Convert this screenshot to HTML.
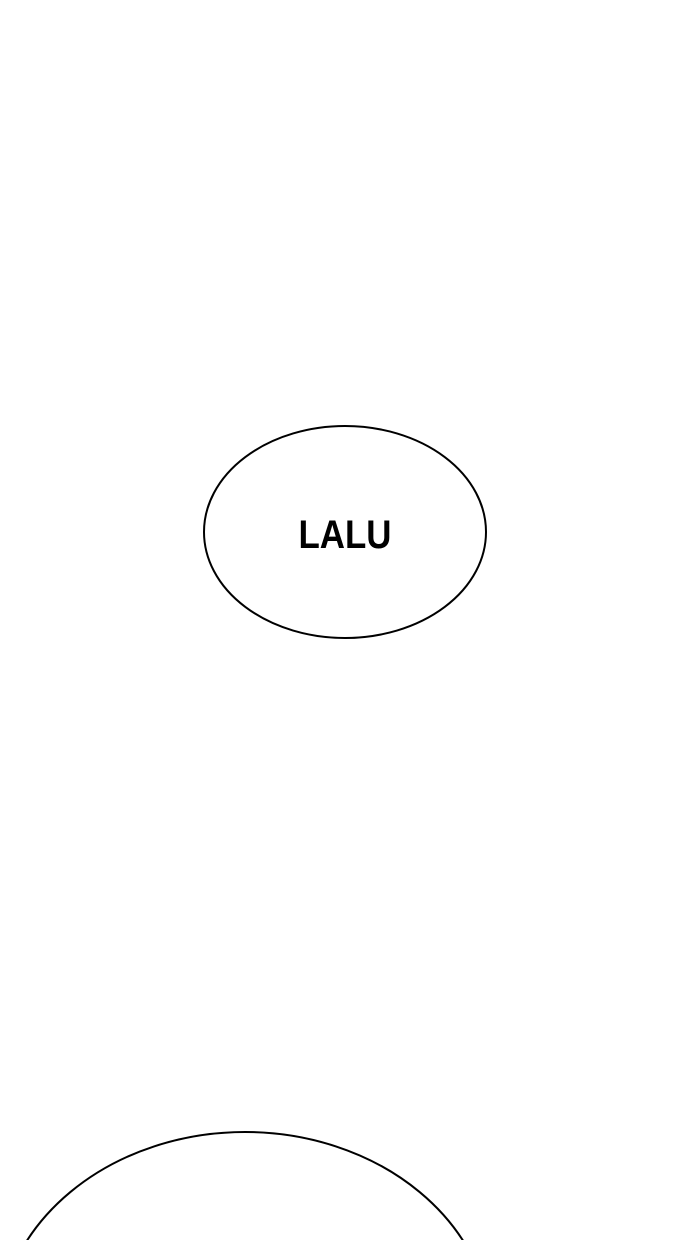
<!DOCTYPE html>
<html><head><style>
html,body{margin:0;padding:0;background:#fff;width:690px;height:1240px;overflow:hidden}
svg{overflow:hidden}
</style></head><body>
<svg width="690" height="1240" viewBox="0 0 690 1240" xmlns="http://www.w3.org/2000/svg" style="display:block">
<ellipse cx="345" cy="532" rx="141" ry="106" fill="#fff" stroke="#000" stroke-width="2"/>
<text x="345" y="548" text-anchor="middle" font-family="Liberation Sans, sans-serif" font-weight="bold" font-size="40" textLength="93" lengthAdjust="spacingAndGlyphs" fill="#000">LALU</text>
<ellipse cx="245" cy="1337" rx="247" ry="205" fill="#fff" stroke="#000" stroke-width="2"/>
</svg>
</body></html>
